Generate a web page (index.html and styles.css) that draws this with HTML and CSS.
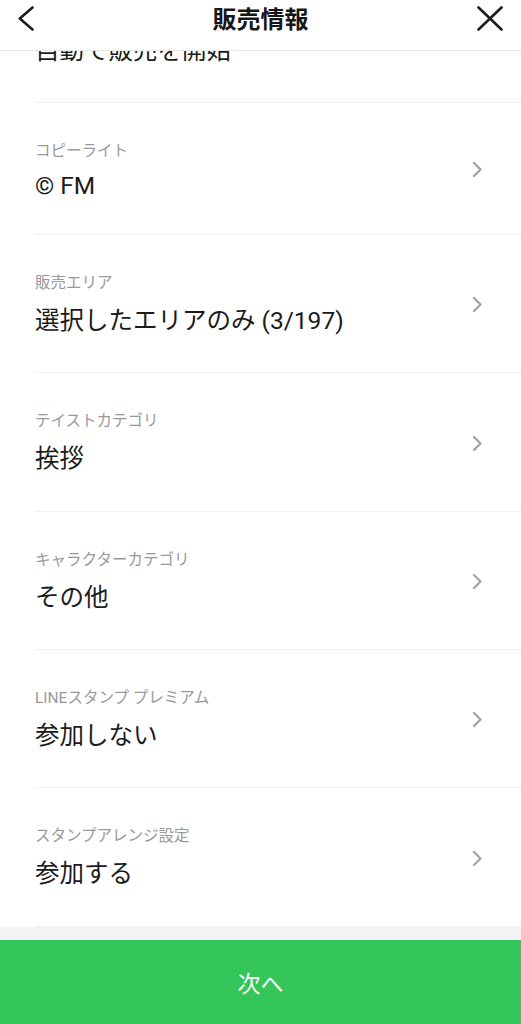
FILE: index.html
```html
<!DOCTYPE html>
<html>
	<head>
		<meta charset="UTF-8">
		<title>販売情報</title>
		<link rel="stylesheet" href="styles.css">
	</head>
	<body>
		<div class="screen">
			<!-- ヘッダー -->
			<header class="nav">
				<a href="javascript:;" class="nav-btn nav-back">
					<svg width="16" height="25" viewBox="0 0 16 25"><path d="M14.5 1.5 L1.8 12.5 L14.5 23.5" /></svg>
				</a>
				<h1 class="nav-title">販売情報</h1>
				<a href="javascript:;" class="nav-btn nav-close">
					<svg width="26" height="25" viewBox="0 0 26 25"><path d="M1.5 1.5 L24.5 23.5 M24.5 1.5 L1.5 23.5" /></svg>
				</a>
			</header>
			<!-- 設定一覧 -->
			<div class="content">
				<ul class="list">
					<li class="row">
						<div class="row-text">
							<p class="row-label">販売開始</p>
							<p class="row-value">自動で販売を開始</p>
						</div>
						<svg class="chevron" width="11" height="17" viewBox="0 0 11 17"><path d="M2 2 L8.5 8.5 L2 15" /></svg>
					</li>
					<li class="row">
						<div class="row-text">
							<p class="row-label">コピーライト</p>
							<p class="row-value row-value-short">© FM</p>
						</div>
						<svg class="chevron" width="11" height="17" viewBox="0 0 11 17"><path d="M2 2 L8.5 8.5 L2 15" /></svg>
					</li>
					<li class="row">
						<div class="row-text">
							<p class="row-label">販売エリア</p>
							<p class="row-value">選択したエリアのみ (3/197)</p>
						</div>
						<svg class="chevron" width="11" height="17" viewBox="0 0 11 17"><path d="M2 2 L8.5 8.5 L2 15" /></svg>
					</li>
					<li class="row">
						<div class="row-text">
							<p class="row-label">テイストカテゴリ</p>
							<p class="row-value">挨拶</p>
						</div>
						<svg class="chevron" width="11" height="17" viewBox="0 0 11 17"><path d="M2 2 L8.5 8.5 L2 15" /></svg>
					</li>
					<li class="row">
						<div class="row-text">
							<p class="row-label">キャラクターカテゴリ</p>
							<p class="row-value">その他</p>
						</div>
						<svg class="chevron" width="11" height="17" viewBox="0 0 11 17"><path d="M2 2 L8.5 8.5 L2 15" /></svg>
					</li>
					<li class="row">
						<div class="row-text">
							<p class="row-label">LINEスタンプ プレミアム</p>
							<p class="row-value">参加しない</p>
						</div>
						<svg class="chevron" width="11" height="17" viewBox="0 0 11 17"><path d="M2 2 L8.5 8.5 L2 15" /></svg>
					</li>
					<li class="row">
						<div class="row-text">
							<p class="row-label">スタンプアレンジ設定</p>
							<p class="row-value">参加する</p>
						</div>
						<svg class="chevron" width="11" height="17" viewBox="0 0 11 17"><path d="M2 2 L8.5 8.5 L2 15" /></svg>
					</li>
				</ul>
			</div>
			<!-- 次へボタン -->
			<a href="javascript:;" class="next-btn">次へ</a>
		</div>
	</body>
</html>
```

FILE: styles.css
```css
*{
	padding: 0;
	margin: 0;
	box-sizing: border-box;
}
li{
	list-style: none;
}
a{
	text-decoration: none;
}
body{
	background: #ffffff;
	font-family: Roboto, "Noto Sans CJK JP", sans-serif;
	color: #1b1b1b;
}
.screen{
	display: flex;
	flex-direction: column;
	height: 100vh;
}
.nav{
	display: flex;
	align-items: center;
	justify-content: space-between;
	height: 51px;
	padding: 0 18px 10px 18px;
	background: #ffffff;
	border-bottom: 1px solid #e8e8e8;
	position: relative;
	z-index: 2;
}
.nav-btn{
	display: flex;
	width: 28px;
	margin-top: -3px;
}
.nav-close{
	justify-content: flex-end;
}
.nav-btn svg path{
	fill: none;
	stroke: #1e1e1e;
	stroke-width: 2.6;
	stroke-linecap: round;
	stroke-linejoin: round;
}
.nav-title{
	font-size: 24px;
	line-height: 32px;
	font-weight: 700;
	color: #161616;
}
.content{
	flex: 1;
	overflow: hidden;
	background: #f3f3f5;
}
.list{
	margin-top: -86px;
	background: #ffffff;
}
.row{
	display: flex;
	align-items: center;
	margin-left: 35px;
	padding: 38px 38px 35.4px 0;
	border-bottom: 1px solid #f0f0f0;
}
.row-text{
	flex: 1;
}
.row-label{
	font-size: 15.5px;
	line-height: 20px;
	color: #999999;
}
.row-value{
	margin-top: 12px;
	font-size: 24.5px;
	line-height: 32px;
	color: #1b1b1b;
}
.row-value-short{
	line-height: 25px;
}
.chevron path{
	fill: none;
	stroke: #a5a5a5;
	stroke-width: 2.4;
	stroke-linecap: round;
	stroke-linejoin: round;
}
.next-btn{
	display: flex;
	align-items: center;
	justify-content: center;
	height: 84px;
	background: #34c65a;
	color: #ffffff;
	font-size: 23px;
	font-weight: 400;
}
```
